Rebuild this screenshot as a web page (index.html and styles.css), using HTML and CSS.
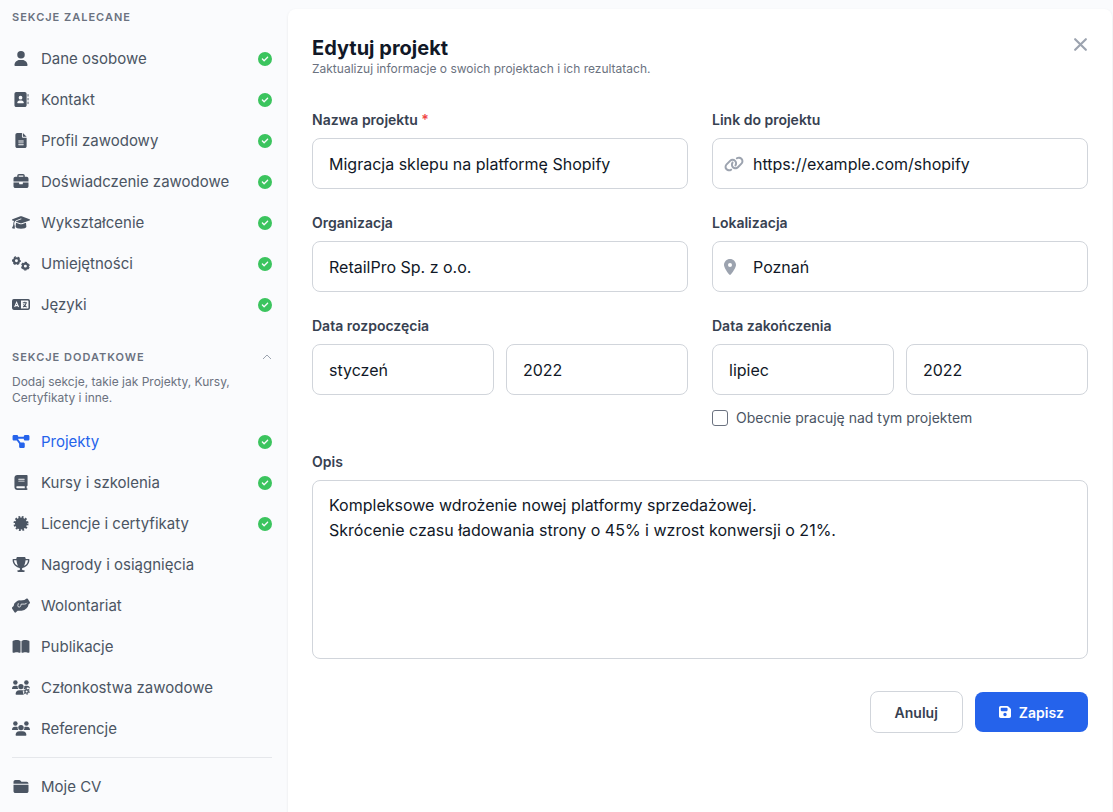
FILE: index.html
```
<!DOCTYPE html>
<html lang="pl">
<head>
    <meta charset="UTF-8">
    <meta name="viewport" content="width=device-width, initial-scale=1.0">
    <title>Edytuj projekt</title>
    <link rel="stylesheet" href="styles.css">
</head>
<body>
    <svg class="sprite" aria-hidden="true">
        <symbol id="i-check" viewBox="0 0 512 512"><path d="M256 512A256 256 0 1 0 256 0a256 256 0 1 0 0 512zM369 209L241 337c-9.400 9.400-24.600 9.400-33.900 0l-64-64c-9.400-9.400-9.400-24.600 0-33.900s24.600-9.400 33.900 0l47 47L335 175c9.400-9.400 24.600-9.400 33.900 0s9.400 24.600 0 33.900z"/></symbol>
        <symbol id="i-user" viewBox="0 0 448 512"><path d="M224 256A128 128 0 1 0 224 0a128 128 0 1 0 0 256zm-45.700 48C79.800 304 0 383.800 0 482.300C0 498.700 13.300 512 29.700 512H418.300c16.400 0 29.700-13.300 29.700-29.700C448 383.800 368.200 304 269.700 304H178.300z"/></symbol>
        <symbol id="i-contact" viewBox="0 0 512 512"><path d="M96 0C60.700 0 32 28.700 32 64V448c0 35.300 28.700 64 64 64H384c35.300 0 64-28.700 64-64V64c0-35.300-28.700-64-64-64H96zM208 288h64c44.200 0 80 35.800 80 80c0 8.800-7.200 16-16 16H144c-8.800 0-16-7.200-16-16c0-44.200 35.800-80 80-80zm-32-96a64 64 0 1 1 128 0 64 64 0 1 1 -128 0zM512 80c0-8.800-7.200-16-16-16s-16 7.200-16 16v64c0 8.800 7.200 16 16 16s16-7.200 16-16V80zM496 192c-8.800 0-16 7.200-16 16v64c0 8.800 7.200 16 16 16s16-7.200 16-16V208c0-8.800-7.200-16-16-16zm16 144c0-8.800-7.200-16-16-16s-16 7.200-16 16v64c0 8.800 7.200 16 16 16s16-7.200 16-16V336z"/></symbol>
        <symbol id="i-file" viewBox="0 0 384 512"><path d="M64 0C28.700 0 0 28.700 0 64V448c0 35.300 28.700 64 64 64H320c35.300 0 64-28.700 64-64V160H256c-17.700 0-32-14.300-32-32V0H64zM256 0V128H384L256 0zM112 256H272c8.800 0 16 7.200 16 16s-7.200 16-16 16H112c-8.800 0-16-7.200-16-16s7.200-16 16-16zm0 64H272c8.800 0 16 7.200 16 16s-7.200 16-16 16H112c-8.800 0-16-7.200-16-16s7.200-16 16-16zm0 64H272c8.800 0 16 7.200 16 16s-7.200 16-16 16H112c-8.800 0-16-7.200-16-16s7.200-16 16-16z"/></symbol>
        <symbol id="i-briefcase" viewBox="0 0 512 512"><path d="M184 48H328c4.400 0 8 3.600 8 8V96H176V56c0-4.400 3.600-8 8-8zm-56 8V96H64C28.700 96 0 124.700 0 160v96H192 320 512V160c0-35.300-28.700-64-64-64H384V56c0-30.900-25.100-56-56-56H184c-30.900 0-56 25.100-56 56zM512 288H320v32c0 17.700-14.300 32-32 32H224c-17.700 0-32-14.300-32-32V288H0V416c0 35.300 28.700 64 64 64H448c35.300 0 64-28.700 64-64V288z"/></symbol>
        <symbol id="i-cap" viewBox="0 0 640 512"><path d="M320 32c-8.100 0-16.100 1.400-23.700 4.100L15.800 137.400C6.300 140.900 0 149.900 0 160s6.300 19.100 15.800 22.600l57.900 20.900C57.300 229.300 48 259.800 48 291.900v28.100c0 28.400-10.800 57.700-22.300 80.800c-6.500 13-13.900 25.800-22.500 37.600C0 442.700-.9 448.300 .9 453.400s6 8.900 11.200 10.200l64 16c4.200 1.100 8.700 .3 12.400-2s6.300-6.100 7.100-10.400c8.600-42.800 4.300-81.200-2.100-108.700C90.300 344.300 86 329.800 80 316.500V291.900c0-30.200 10.200-58.700 27.900-81.500c12.900-15.500 29.600-28 49.200-35.700l157-61.700c8.200-3.200 17.500 .8 20.700 9s-.8 17.500-9 20.700l-157 61.700c-12.400 4.900-23.300 12.400-32.200 21.600l159.600 57.600c7.600 2.700 15.600 4.100 23.700 4.100s16.100-1.400 23.700-4.100L624.200 182.600c9.500-3.400 15.800-12.500 15.800-22.600s-6.300-19.100-15.800-22.600L343.700 36.100C336.100 33.400 328.100 32 320 32zM128 408c0 35.300 86 72 192 72s192-36.700 192-72L496.700 262.600 354.500 314c-11.100 4-22.800 6-34.500 6s-23.500-2-34.500-6L143.300 262.600 128 408z"/></symbol>
        <symbol id="i-gears" viewBox="0 0 640 512">
            <g fill="none" stroke="currentColor">
                <circle cx="158" cy="158" r="90" stroke-width="76"/>
                <circle cx="158" cy="158" r="136" stroke-width="44" stroke-dasharray="80 62.420" stroke-dashoffset="40"/>
                <circle cx="476" cy="350" r="90" stroke-width="76"/>
                <circle cx="476" cy="350" r="136" stroke-width="44" stroke-dasharray="80 62.420" stroke-dashoffset="111"/>
            </g>
        </symbol>
        <symbol id="i-language" viewBox="0 0 640 512">
            <path fill-rule="evenodd" d="M64 64H576a64 64 0 0 1 64 64V384a64 64 0 0 1-64 64H64a64 64 0 0 1-64-64V128a64 64 0 0 1 64-64zM320 118V394H562a24 24 0 0 0 24-24V142a24 24 0 0 0-24-24z"/>
            <path class="cut" d="M94 344L164 176L234 344M120 296H208"/>
            <path class="stroke" d="M384 196H528M456 160V196M504 196C492 270 448 322 392 344M410 244C436 300 474 330 520 344"/>
        </symbol>
        <symbol id="i-project" viewBox="0 0 576 512"><path d="M0 80C0 53.500 21.500 32 48 32h96c26.500 0 48 21.500 48 48V96H384V80c0-26.500 21.500-48 48-48h96c26.500 0 48 21.500 48 48v96c0 26.500-21.500 48-48 48H432c-26.500 0-48-21.500-48-48V160H192v16c0 1.700-.1 3.400-.3 5L272 288h96c26.500 0 48 21.500 48 48v96c0 26.500-21.500 48-48 48H272c-26.500 0-48-21.500-48-48V336c0-1.700 .1-3.400 .3-5L144 224H48c-26.500 0-48-21.500-48-48V80z"/></symbol>
        <symbol id="i-book" viewBox="0 0 448 512"><path d="M96 0C43 0 0 43 0 96V416c0 53 43 96 96 96H384h32c17.700 0 32-14.300 32-32s-14.300-32-32-32V384c17.700 0 32-14.300 32-32V32c0-17.700-14.300-32-32-32H384 96zm0 384H352v64H96c-17.700 0-32-14.300-32-32s14.300-32 32-32zm32-240c0-8.800 7.200-16 16-16H336c8.800 0 16 7.200 16 16s-7.200 16-16 16H144c-8.800 0-16-7.200-16-16zm16 48H336c8.800 0 16 7.200 16 16s-7.200 16-16 16H144c-8.800 0-16-7.200-16-16s7.200-16 16-16z"/></symbol>
        <symbol id="i-badge" viewBox="0 0 512 512">
            <circle cx="256" cy="256" r="206"/>
            <circle cx="256" cy="256" r="214" fill="none" stroke="currentColor" stroke-width="84" stroke-dasharray="60 52.050"/>
        </symbol>
        <symbol id="i-trophy" viewBox="0 0 576 512"><path d="M400 0H176c-26.500 0-48.100 21.800-47.100 48.200c.2 5.300 .4 10.600 .7 15.800H24C10.700 64 0 74.700 0 88c0 92.600 33.500 157 78.500 200.700c44.300 43.100 98.300 64.800 138.100 75.800c23.400 6.500 39.400 26 39.400 45.600c0 20.900-17 37.900-37.900 37.900H192c-17.700 0-32 14.300-32 32s14.300 32 32 32H384c17.700 0 32-14.300 32-32s-14.300-32-32-32H357.900C337 448 320 431 320 410.100c0-19.600 15.900-39.200 39.400-45.600c39.900-11 93.900-32.700 138.200-75.800C542.500 245 576 180.600 576 88c0-13.300-10.700-24-24-24H446.400c.3-5.200 .5-10.400 .7-15.800C448.100 21.800 426.500 0 400 0zM48.900 112h84.400c9.100 90.100 29.200 150.300 51.900 190.600c-24.900-11-50.800-26.500-73.200-48.300c-32-31.100-58-76-63-142.300zM464.100 254.300c-22.400 21.800-48.300 37.300-73.200 48.300c22.700-40.300 42.800-100.500 51.900-190.600h84.400c-5.100 66.300-31.100 111.200-63 142.300z"/></symbol>
        <symbol id="i-hands" viewBox="0 0 640 512">
            <path d="M0 330L58 270Q60 170 150 120Q220 70 300 74L440 60L520 6Q545-4 560 16L636 140Q646 165 624 182L584 220Q590 300 520 350Q450 430 340 440L200 446L130 504Q105 518 90 496L6 370Q-6 348 0 330z"/>
            <path class="cut thin" d="M226 176L206 262Q208 316 262 312Q300 306 310 268L326 206H450Q510 200 530 160"/>
        </symbol>
        <symbol id="i-open-book" viewBox="0 0 576 512"><path d="M249.600 471.500c10.800 3.800 22.400-4.100 22.400-15.500V78.600c0-4.200-1.600-8.400-5-11C247.400 52 202.400 32 144 32C93.500 32 46.300 45.300 18.100 56.100C6.800 60.500 0 71.700 0 83.800V454.100c0 11.900 12.800 20.200 24.100 16.500C55.600 460.100 105.500 448 144 448c33.900 0 79 14 105.600 23.500zm76.800 0C353 462 398.100 448 432 448c38.500 0 88.400 12.100 119.900 22.600c11.300 3.800 24.100-4.600 24.100-16.500V83.800c0-12.100-6.800-23.300-18.100-27.600C529.700 45.300 482.500 32 432 32c-58.400 0-103.400 20-123 35.600c-3.300 2.600-5 6.800-5 11V456c0 11.400 11.700 19.300 22.400 15.500z"/></symbol>
        <symbol id="i-members" viewBox="0 0 640 512">
            <circle cx="120" cy="80" r="80"/><circle cx="512" cy="80" r="80"/><circle cx="318" cy="224" r="94"/>
            <path d="M106 192H160Q186 192 200 200Q188 262 228 310H21Q0 310 0 298Q4 198 106 192zM478 192H534Q632 198 640 298Q600 250 540 258L470 310H408Q450 262 436 200Q450 192 478 192zM262 352H390Q362 430 420 512H154Q128 512 128 485Q134 358 262 352z"/>
            <circle cx="520" cy="396" r="60" fill="none" stroke="currentColor" stroke-width="48"/>
            <circle cx="520" cy="396" r="96" fill="none" stroke="currentColor" stroke-width="38" stroke-dasharray="52 48.530"/>
        </symbol>
        <symbol id="i-people" viewBox="0 0 640 512">
            <circle cx="120" cy="80" r="80"/><circle cx="512" cy="80" r="80"/><circle cx="320" cy="224" r="96"/>
            <path d="M106 192H160Q186 192 200 200Q188 262 228 310H21Q0 310 0 298Q4 198 106 192zM478 192H534Q632 198 640 298Q640 310 619 310H412Q452 262 440 200Q454 192 478 192zM262 352H378Q506 358 512 485Q512 512 485 512H154Q128 512 128 485Q134 358 262 352z"/>
        </symbol>
        <symbol id="i-folder" viewBox="0 0 512 512"><path d="M448 480H64c-35.300 0-64-28.700-64-64V192H512V416c0 35.300-28.700 64-64 64zm64-320H0V96C0 60.700 28.700 32 64 32H192c20.100 0 39.100 9.500 51.200 25.600l19.200 25.600c6 8.100 15.500 12.800 25.600 12.800H448c35.300 0 64 28.700 64 64z"/></symbol>
        <symbol id="i-link" viewBox="0 0 640 512"><path d="M579.800 267.700c56.500-56.500 56.500-148 0-204.500c-50-50-128.800-56.500-186.300-15.400l-1.600 1.100c-14.400 10.300-17.700 30.300-7.400 44.600s30.300 17.700 44.600 7.400l1.600-1.100c32.100-22.900 76-19.300 103.800 8.600c31.500 31.500 31.500 82.500 0 114L422.300 334.800c-31.500 31.500-82.500 31.500-114 0c-27.900-27.900-31.500-71.800-8.600-103.800l1.100-1.600c10.300-14.400 6.900-34.400-7.400-44.600s-34.400-6.900-44.600 7.400l-1.100 1.600C206.500 251.200 213 330 263 380c56.500 56.500 148 56.500 204.500 0L579.800 267.700zM60.200 244.300c-56.500 56.500-56.500 148 0 204.500c50 50 128.800 56.500 186.300 15.400l1.600-1.100c14.400-10.300 17.700-30.300 7.400-44.600s-30.300-17.700-44.600-7.400l-1.600 1.100c-32.100 22.900-76 19.300-103.800-8.600C74 372 74 321 105.500 289.500L217.700 177.200c31.500-31.500 82.500-31.500 114 0c27.900 27.900 31.500 71.800 8.600 103.900l-1.100 1.600c-10.300 14.400-6.900 34.400 7.400 44.600s34.400 6.900 44.600-7.400l1.100-1.600C433.500 260.800 427 182 377 132c-56.500-56.500-148-56.500-204.500 0L60.200 244.300z"/></symbol>
        <symbol id="i-pin" viewBox="0 0 384 512"><path d="M215.700 499.200C267 435 384 279.400 384 192C384 86 298 0 192 0S0 86 0 192c0 87.400 117 243 168.300 307.200c12.300 15.300 35.100 15.300 47.400 0zM192 128a64 64 0 1 1 0 128 64 64 0 1 1 0-128z"/></symbol>
        <symbol id="i-save" viewBox="0 0 448 512"><path d="M64 32C28.700 32 0 60.700 0 96V416c0 35.300 28.700 64 64 64H384c35.300 0 64-28.700 64-64V173.300c0-17-6.700-33.300-18.700-45.300L352 50.700C340 38.700 323.700 32 306.700 32H64zm0 96c0-17.700 14.300-32 32-32H288c17.700 0 32 14.300 32 32v64c0 17.700-14.300 32-32 32H96c-17.700 0-32-14.300-32-32V128zM224 288a64 64 0 1 1 0 128 64 64 0 1 1 0-128z"/></symbol>
    </svg>

    <div class="layout">
        <aside class="sidebar">
            <h2 class="section-title">Sekcje zalecane</h2>
            <nav class="menu">
                <a href="#"><svg class="icon"><use href="#i-user"/></svg><span>Dane osobowe</span><svg class="check"><use href="#i-check"/></svg></a>
                <a href="#"><svg class="icon"><use href="#i-contact"/></svg><span>Kontakt</span><svg class="check"><use href="#i-check"/></svg></a>
                <a href="#"><svg class="icon"><use href="#i-file"/></svg><span>Profil zawodowy</span><svg class="check"><use href="#i-check"/></svg></a>
                <a href="#"><svg class="icon"><use href="#i-briefcase"/></svg><span>Doświadczenie zawodowe</span><svg class="check"><use href="#i-check"/></svg></a>
                <a href="#"><svg class="icon"><use href="#i-cap"/></svg><span>Wykształcenie</span><svg class="check"><use href="#i-check"/></svg></a>
                <a href="#"><svg class="icon"><use href="#i-gears"/></svg><span>Umiejętności</span><svg class="check"><use href="#i-check"/></svg></a>
                <a href="#"><svg class="icon"><use href="#i-language"/></svg><span>Języki</span><svg class="check"><use href="#i-check"/></svg></a>
            </nav>

            <div class="section-head">
                <h2 class="section-title">Sekcje dodatkowe</h2>
                <button type="button" class="toggle" aria-label="Zwiń">
                    <svg viewBox="0 0 10 6"><path d="M1 5L5 1L9 5"/></svg>
                </button>
            </div>
            <p class="section-text">Dodaj sekcje, takie jak Projekty, Kursy, Certyfikaty i inne.</p>
            <nav class="menu">
                <a href="#" class="active"><svg class="icon"><use href="#i-project"/></svg><span>Projekty</span><svg class="check"><use href="#i-check"/></svg></a>
                <a href="#"><svg class="icon"><use href="#i-book"/></svg><span>Kursy i szkolenia</span><svg class="check"><use href="#i-check"/></svg></a>
                <a href="#"><svg class="icon"><use href="#i-badge"/></svg><span>Licencje i certyfikaty</span><svg class="check"><use href="#i-check"/></svg></a>
                <a href="#"><svg class="icon"><use href="#i-trophy"/></svg><span>Nagrody i osiągnięcia</span></a>
                <a href="#"><svg class="icon"><use href="#i-hands"/></svg><span>Wolontariat</span></a>
                <a href="#"><svg class="icon"><use href="#i-open-book"/></svg><span>Publikacje</span></a>
                <a href="#"><svg class="icon"><use href="#i-members"/></svg><span>Członkostwa zawodowe</span></a>
                <a href="#"><svg class="icon"><use href="#i-people"/></svg><span>Referencje</span></a>
            </nav>
            <nav class="menu menu-bottom">
                <a href="#"><svg class="icon"><use href="#i-folder"/></svg><span>Moje CV</span></a>
            </nav>
        </aside>

        <main class="panel">
            <header class="panel-header">
                <div>
                    <h1>Edytuj projekt</h1>
                    <p>Zaktualizuj informacje o swoich projektach i ich rezultatach.</p>
                </div>
                <button type="button" class="close" aria-label="Zamknij">
                    <svg viewBox="0 0 14 14"><path d="M2 2L12 12M12 2L2 12"/></svg>
                </button>
            </header>

            <form class="project-form">
                <div class="form-group">
                    <label for="name">Nazwa projektu <span class="required">*</span></label>
                    <input type="text" id="name" name="name" value="Migracja sklepu na platformę Shopify" required>
                </div>
                <div class="form-group">
                    <label for="link">Link do projektu</label>
                    <div class="input-icon">
                        <svg class="icon-link"><use href="#i-link"/></svg>
                        <input type="text" id="link" name="link" value="https://example.com/shopify">
                    </div>
                </div>
                <div class="form-group">
                    <label for="organization">Organizacja</label>
                    <input type="text" id="organization" name="organization" value="RetailPro Sp. z o.o.">
                </div>
                <div class="form-group">
                    <label for="location">Lokalizacja</label>
                    <div class="input-icon">
                        <svg class="icon-pin"><use href="#i-pin"/></svg>
                        <input type="text" id="location" name="location" value="Poznań">
                    </div>
                </div>
                <div class="form-group">
                    <label for="start-month">Data rozpoczęcia</label>
                    <div class="date-row">
                        <select id="start-month" name="start-month"><option>styczeń</option></select>
                        <select name="start-year" aria-label="Rok rozpoczęcia"><option>2022</option></select>
                    </div>
                </div>
                <div class="form-group">
                    <label for="end-month">Data zakończenia</label>
                    <div class="date-row">
                        <select id="end-month" name="end-month"><option>lipiec</option></select>
                        <select name="end-year" aria-label="Rok zakończenia"><option>2022</option></select>
                    </div>
                    <div class="checkbox-row">
                        <input type="checkbox" id="current" name="current">
                        <label for="current">Obecnie pracuję nad tym projektem</label>
                    </div>
                </div>
                <div class="form-group full">
                    <label for="description">Opis</label>
                    <textarea id="description" name="description" rows="6">Kompleksowe wdrożenie nowej platformy sprzedażowej.
Skrócenie czasu ładowania strony o 45% i wzrost konwersji o 21%.</textarea>
                </div>
                <div class="actions full">
                    <button type="button" class="btn btn-cancel">Anuluj</button>
                    <button type="submit" class="btn btn-save"><svg><use href="#i-save"/></svg>Zapisz</button>
                </div>
            </form>
        </main>
    </div>
</body>
</html>
```
FILE: styles.css
```
* {
    box-sizing: border-box;
}
body {
    margin: 0;
    font-family: Inter, "Liberation Sans", sans-serif;
    font-size: 15px;
    color: #4b5563;
    background-color: #fafbfd;
}
h1, h2, p {
    margin: 0;
}
svg {
    fill: currentColor;
    flex-shrink: 0;
}
button, input, select, textarea {
    font-family: inherit;
}
.sprite {
    display: none;
}
.cut, .stroke {
    fill: none;
    stroke: #fafbfd;
    stroke-width: 36px;
}
.cut.thin {
    stroke-width: 28px;
}
.stroke {
    stroke: currentColor;
}
.layout {
    display: flex;
    height: 100vh;
    overflow: hidden;
}

/* Sidebar */
.sidebar {
    flex: 0 0 288px;
    padding: 9px 16px 0 12px;
}
.section-title {
    font-size: 11px;
    line-height: 16px;
    font-weight: 600;
    letter-spacing: 1px;
    text-transform: uppercase;
    color: #6b7280;
}
.section-head {
    display: flex;
    justify-content: space-between;
    align-items: center;
    margin-top: 24px;
}
.section-text {
    margin-top: 9px;
    padding-right: 32px;
    font-size: 12px;
    line-height: 16px;
    color: #6b7280;
}
.toggle {
    display: flex;
    padding: 0;
    border: none;
    background: none;
    color: #9ca3af;
    cursor: pointer;
}
.toggle svg {
    width: 10px;
    height: 6px;
    fill: none;
    stroke: currentColor;
}
.menu {
    margin-top: 13px;
}
.section-text + .menu {
    margin-top: 15px;
}
.menu a {
    display: flex;
    align-items: center;
    gap: 11px;
    height: 41px;
    color: #4b5563;
    text-decoration: none;
}
.menu a span {
    flex: 1;
}
.menu a.active {
    color: #2563eb;
}
.menu .icon {
    width: 18px;
    height: 15px;
}
.menu .check {
    width: 14px;
    height: 14px;
    color: #3bc45e;
}
.menu-bottom {
    margin-top: 8px;
    padding-top: 8px;
    border-top: 1px solid #e5e7eb;
}

/* Edit panel */
.panel {
    flex: 1;
    margin: 9px 1px 0 0;
    padding: 26px 24px 24px;
    background-color: #fff;
    border-radius: 8px 8px 0 0;
    box-shadow: 0 1px 3px rgba(0, 0, 0, 0.08);
}
.panel-header {
    display: flex;
    justify-content: space-between;
    align-items: flex-start;
}
.panel-header h1 {
    font-size: 20px;
    line-height: 26px;
    font-weight: 700;
    color: #111827;
}
.panel-header p {
    font-size: 12px;
    line-height: 16px;
    color: #6b7280;
}
.close {
    display: flex;
    margin-top: 2px;
    padding: 0;
    border: none;
    background: none;
    color: #9ca3af;
    cursor: pointer;
}
.close svg {
    width: 15px;
    height: 15px;
    stroke: currentColor;
    stroke-width: 2px;
    stroke-linecap: round;
}
.project-form {
    display: grid;
    grid-template-columns: 1fr 1fr;
    gap: 24px;
    margin-top: 33px;
}
.form-group > label {
    display: block;
    margin-bottom: 8px;
    font-size: 14px;
    line-height: 20px;
    font-weight: 600;
    color: #374151;
}
.required {
    color: #ef4444;
}
.form-group input[type="text"], .form-group select, .form-group textarea {
    display: block;
    width: 100%;
    height: 51px;
    padding: 0 16px;
    font-size: 16px;
    color: #111827;
    background-color: #fff;
    border: 1px solid #d1d5db;
    border-radius: 8px;
    appearance: none;
}
.form-group textarea {
    height: 179px;
    padding: 12px 16px;
    line-height: 25px;
    resize: none;
}
.input-icon {
    position: relative;
}
.input-icon svg {
    position: absolute;
    left: 12px;
    top: 50%;
    height: 16px;
    transform: translateY(-50%);
    color: #9ca3af;
}
.input-icon .icon-link {
    width: 20px;
}
.input-icon .icon-pin {
    width: 12px;
}
.form-group .input-icon input {
    padding-left: 40px;
}
.date-row {
    display: grid;
    grid-template-columns: 1fr 1fr;
    gap: 12px;
}
.checkbox-row {
    display: flex;
    align-items: center;
    gap: 8px;
    margin-top: 12px;
    font-size: 14px;
    line-height: 21px;
}
.checkbox-row input {
    width: 16px;
    height: 16px;
    margin: 0;
    border: 1px solid #6b7280;
    border-radius: 3px;
    background-color: #fff;
    appearance: none;
}
.checkbox-row input:checked {
    background-color: #2563eb;
}
.full {
    grid-column: 1 / -1;
}
.actions {
    display: flex;
    justify-content: flex-end;
    align-items: center;
    gap: 12px;
    margin-top: 8px;
}
.btn {
    display: flex;
    align-items: center;
    justify-content: center;
    gap: 8px;
    height: 40px;
    padding: 0 24px;
    font-size: 14px;
    font-weight: 600;
    border: none;
    border-radius: 8px;
    cursor: pointer;
}
.btn-cancel {
    height: 42px;
    color: #374151;
    background-color: #fff;
    border: 1px solid #d1d5db;
}
.btn-save {
    color: #fff;
    background-color: #2563eb;
}
.btn-save svg {
    width: 12px;
    height: 14px;
}
.btn-save:hover {
    background-color: #1d4ed8;
}
```
